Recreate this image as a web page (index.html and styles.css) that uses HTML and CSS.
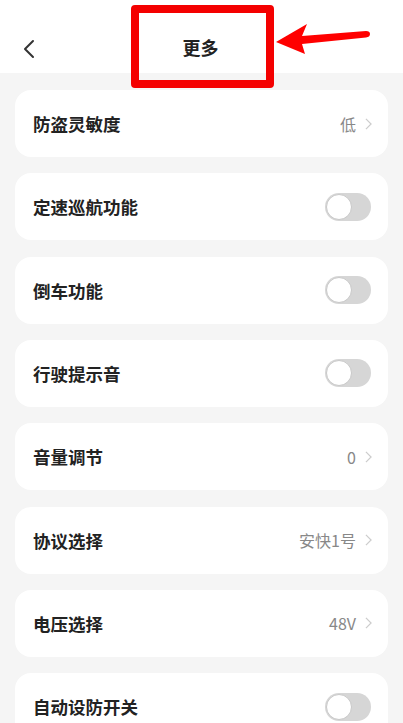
FILE: index.html
```html
<!DOCTYPE html>
<html lang="zh">
<head>
<meta charset="utf-8">
<link rel="stylesheet" href="styles.css">
</head>
<body>
<div class="page">
  <header class="header">
    <svg class="back" viewBox="0 0 12 20" width="12" height="20"><path d="M10 2 L2 10 L10 18" fill="none" stroke="#333" stroke-width="2" stroke-linecap="round" stroke-linejoin="round"/></svg>
    <h1 class="title">更多</h1>
  </header>
  <main class="list">
    <div class="card"><span class="label">防盗灵敏度</span><span class="value">低<svg class="chev" viewBox="0 0 8 14" width="7" height="12"><path d="M1 1 L7 7 L1 13" fill="none" stroke="#ccc" stroke-width="1.4"/></svg></span></div>
    <div class="card"><span class="label">定速巡航功能</span><span class="toggle"><span class="knob"></span></span></div>
    <div class="card"><span class="label">倒车功能</span><span class="toggle"><span class="knob"></span></span></div>
    <div class="card"><span class="label">行驶提示音</span><span class="toggle"><span class="knob"></span></span></div>
    <div class="card"><span class="label">音量调节</span><span class="value">0<svg class="chev" viewBox="0 0 8 14" width="7" height="12"><path d="M1 1 L7 7 L1 13" fill="none" stroke="#ccc" stroke-width="1.4"/></svg></span></div>
    <div class="card"><span class="label">协议选择</span><span class="value">安快1号<svg class="chev" viewBox="0 0 8 14" width="7" height="12"><path d="M1 1 L7 7 L1 13" fill="none" stroke="#ccc" stroke-width="1.4"/></svg></span></div>
    <div class="card"><span class="label">电压选择</span><span class="value">48V<svg class="chev" viewBox="0 0 8 14" width="7" height="12"><path d="M1 1 L7 7 L1 13" fill="none" stroke="#ccc" stroke-width="1.4"/></svg></span></div>
    <div class="card"><span class="label">自动设防开关</span><span class="toggle"><span class="knob"></span></span></div>
  </main>
  <div class="highlight"></div>
  <svg class="arrow" viewBox="0 0 100 34" width="100" height="34"><path d="M2 20 L33 2 L28 14 L92 9 Q96 9 96 12 Q96 15 92 15.5 L28 22 L31 32 Z" fill="#f00"/></svg>
</div>
</body>
</html>
```
FILE: styles.css
```css
* { box-sizing: border-box; }
html, body { margin: 0; padding: 0; }
body {
  font-family: "Noto Sans CJK SC", "Noto Sans", sans-serif;
  background: #f5f5f5;
  width: 403px;
  height: 723px;
  overflow: hidden;
}
.page { position: relative; }
.header {
  height: 73px;
  background: #fff;
  display: flex;
  align-items: center;
  justify-content: center;
  position: relative;
}
.back { position: absolute; left: 23px; top: 39px; }
.title {
  margin: 0;
  font-size: 18px;
  font-weight: 700;
  color: #222;
  padding-top: 21px;
  padding-right: 2px;
}
.list {
  padding: 17px 15px 0;
  display: flex;
  flex-direction: column;
  gap: 16.33px;
}
.card {
  height: 67px;
  background: #fff;
  border-radius: 16px;
  display: flex;
  align-items: center;
  justify-content: space-between;
  padding: 0 16px 0 18px;
}
.label {
  font-size: 17.5px;
  font-weight: 700;
  color: #222;
}
.value {
  font-size: 16px;
  color: #888;
  display: flex;
  align-items: center;
  gap: 9px;
  font-family: "Noto Sans CJK SC", Roboto, sans-serif;
}
.chev { display: block; }
.toggle {
  width: 46px;
  height: 28px;
  border-radius: 14px;
  background: #d6d6d6;
  position: relative;
  margin-right: 1px;
}
.knob {
  position: absolute;
  left: 1px;
  top: 1px;
  width: 26px;
  height: 26px;
  border-radius: 50%;
  background: #fff;
  border: 1px solid #c8c8c8;
}
.highlight {
  position: absolute;
  left: 131px;
  top: 5px;
  width: 143px;
  height: 83px;
  border: 8px solid #f40000;
  border-radius: 4px;
}
.arrow {
  position: absolute;
  left: 274px;
  top: 22px;
}
```
